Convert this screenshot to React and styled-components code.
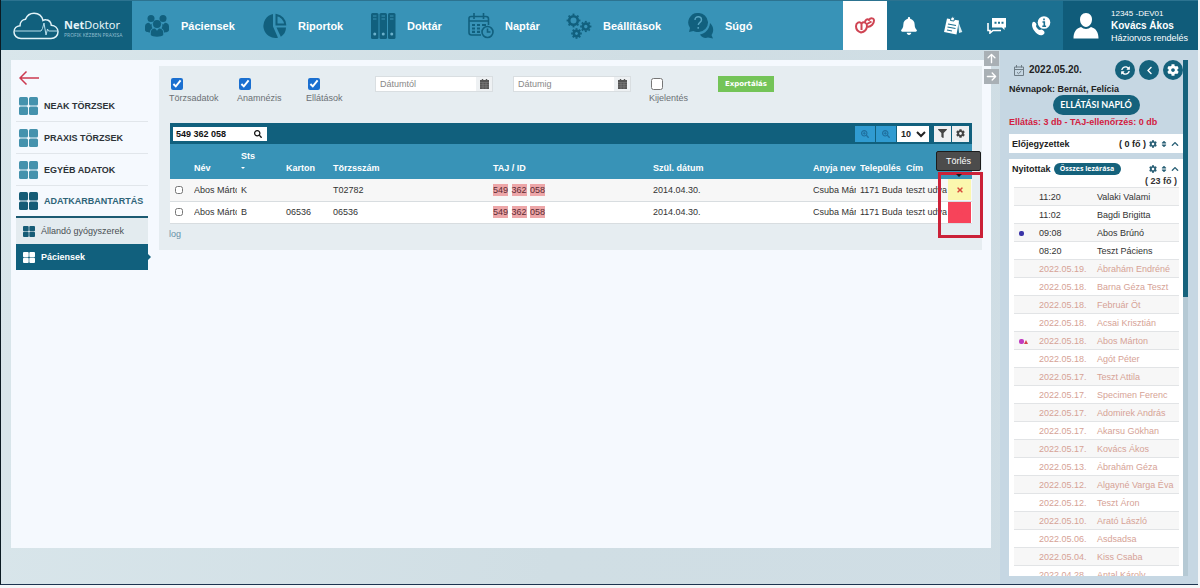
import { useState } from 'react';
import styled, { createGlobalStyle } from 'styled-components';
import { FaSearch, FaSearchPlus, FaFilter, FaCog, FaChevronLeft, FaChevronUp, FaSort, FaSyncAlt, FaBell, FaTimes } from 'react-icons/fa';
import { FaArrowUp, FaArrowRight } from 'react-icons/fa6';

const menuItems = ['NEAK TÖRZSEK', 'PRAXIS TÖRZSEK', 'EGYÉB ADATOK']

const patients = [
  { name: 'Abos Márton', sts: 'K', karton: '', torzs: 'T02782' },
  { name: 'Abos Márton', sts: 'B', karton: '06536', torzs: '06536' },
]

const opened = [
  { when: '11:20', name: 'Valaki Valami', today: true },
  { when: '11:02', name: 'Bagdi Brigitta', today: true },
  { when: '09:08', name: 'Abos Brúnó', today: true, mark: 'blue' },
  { when: '08:20', name: 'Teszt Páciens', today: true },
  { when: '2022.05.19.', name: 'Ábrahám Endréné' },
  { when: '2022.05.18.', name: 'Barna Géza Teszt' },
  { when: '2022.05.18.', name: 'Február Öt' },
  { when: '2022.05.18.', name: 'Acsai Krisztián' },
  { when: '2022.05.18.', name: 'Abos Márton', mark: 'pink' },
  { when: '2022.05.18.', name: 'Agót Péter' },
  { when: '2022.05.17.', name: 'Teszt Attila' },
  { when: '2022.05.17.', name: 'Specimen Ferenc' },
  { when: '2022.05.17.', name: 'Adomirek András' },
  { when: '2022.05.17.', name: 'Akarsu Gökhan' },
  { when: '2022.05.17.', name: 'Kovács Ákos' },
  { when: '2022.05.13.', name: 'Ábrahám Géza' },
  { when: '2022.05.12.', name: 'Algayné Varga Éva' },
  { when: '2022.05.12.', name: 'Teszt Áron' },
  { when: '2022.05.10.', name: 'Arató László' },
  { when: '2022.05.06.', name: 'Asdsadsa' },
  { when: '2022.05.04.', name: 'Kiss Csaba' },
  { when: '2022.04.28.', name: 'Antal Károly' },
]

const CloudLogo = () => (
  <svg width="46" height="28" viewBox="0 0 46 28" fill="none" stroke="#b9dfec" strokeWidth="1.5">
    <path d="M8 26.5C4 26.5 1 23.7 1 20c0-3.600 2.600-6 6-6.300C7 10 9.500 7.500 12.500 7.200 14 3.500 17 1.200 21 1.200c4.500 0 8 2.800 9 7.300 1-.8 2-1 3-.8 3 .3 5 2.500 5.300 5.500C42 13.500 45 16 45 19.800c0 4-3 6.700-7 6.700z" stroke="#e2f3f8" />
    <path d="M2 19h26l1.500-2.500L31 11l2 12 1.500-6 1 2H45" strokeWidth="1" />
  </svg>
)

const PeopleIcon = () => (
  <svg width="26" height="24" viewBox="0 0 26 24" fill="#11607e">
    <circle cx="7" cy="4.500" r="3.500" /><circle cx="19" cy="4.500" r="3.500" />
    <path d="M1 16v-3.500C1 10 2.800 8.800 5 8.800l2 2 2-2c-2 2-1.500 4-.5 5.500C7 15 6 16.500 6 18.500c-2 0-5-.7-5-2.500zM25 16v-3.500c0-2.500-1.800-3.700-4-3.700l-2 2-2-2c2 2 1.500 4 .5 5.500 1.500.7 2.500 2.200 2.500 4.200 2 0 5-.7 5-2.500z" />
    <circle cx="13" cy="10" r="4" />
    <path d="M6.800 21v-2.500c0-2.500 1.700-4 4.200-4l2 2.300 2-2.300c2.500 0 4.200 1.500 4.200 4V21c-1.500 2.300-10.900 2.300-12.400 0z" />
  </svg>
)

const PieIcon = () => (
  <svg width="26" height="26" viewBox="0 0 26 26" fill="#11607e">
    <path d="M12 1v12.500l5 11.200A12 12 0 1 1 12 1z" />
    <path d="M15.500 2a10.500 10.500 0 0 1 8.700 9.500h-8.700z" fill="none" stroke="#11607e" strokeWidth="2" />
    <path d="M15.500 14.500h9.500c0 4-2 7.300-5.200 9.300z" />
  </svg>
)

const BindersIcon = () => (
  <svg width="26" height="26" viewBox="0 0 26 26">
    {[1, 9.5, 18].map(x => (
      <g key={x}>
        <rect x={x} y="0" width="7.500" height="26" rx="1.500" fill="#11607e" />
        <path d={`M${x + 2} 3h3.500M${x + 2} 6h3.500`} stroke="#3b91b2" strokeWidth="1" />
        <circle cx={x + 3.75} cy="21" r="1.500" fill="#6bb0cb" />
      </g>
    ))}
  </svg>
)

const CalendarClockIcon = () => (
  <svg width="26" height="26" viewBox="0 0 26 26" fill="none" stroke="#11607e" strokeWidth="1.600">
    <path d="M13 22H3.500Q1 22 1 19.500V5.500Q1 3.500 3 3.500h15q2.500 0 2.500 2.500v6M1 8h19.500M6 0v6M15.500 0v6" />
    <path d="M4 12h3m2 0h3m2 0h4M4 15.500h3m2 0h3M4 18.800h3m2 0h3" strokeWidth="2.200" />
    <circle cx="19.500" cy="19" r="5.500" />
    <path d="M19.500 15.500V19h3" />
  </svg>
)

const Gear = ({ x, y, r }) => (
  <g transform={`translate(${x} ${y})`} stroke="#11607e">
    <circle r={r} fill="none" strokeWidth="2.600" />
    {[0, 45, 90, 135, 180, 225, 270, 315].map(a => (
      <path key={a} d={`M0 ${r + 1}v1.600`} strokeWidth="1.900" transform={`rotate(${a})`} />
    ))}
  </g>
)

const GearsIcon = () => (
  <svg width="26" height="26" viewBox="0 0 26 26">
    <Gear x={7.5} y={7.5} r={4.3} />
    <Gear x={19.8} y={13.5} r={3} />
    <Gear x={10.5} y={20.5} r={2.7} />
  </svg>
)

const HelpIcon = () => (
  <svg width="26" height="26" viewBox="0 0 26 26">
    <path d="M10 0a9.500 9.500 0 0 1 1 19c-2 .3-4-.2-5.500-1L1 19l1-4A9.500 9.500 0 0 1 10 0z" fill="#11607e" />
    <path d="M22 10c4 3.500 4 9 1.500 12l1.500 3.500-5-1c-3 1-6.500 0-8-3C17 21 21.500 16 22 10z" fill="#11607e" />
    <path d="M7 7c0-4.500 6.500-4 6.500-.3 0 2.800-3 2.500-3.200 5.300M10.200 14v1.800" fill="none" stroke="#58a5c2" strokeWidth="1.400" />
  </svg>
)

const HeartsIcon = () => (
  <svg width="20" height="17" viewBox="0 0 20 17" fill="none" stroke="#cf4453" strokeWidth="2">
    <path d="M6 15.500C2.500 14.500 1 12 1 9.300 1 5.500 4.500 4 6.500 6.500 9 4 12.300 6 12 9.500c-.4 3-3 5.500-6 6zM6.500 6.500v6.500" />
    <path d="M10 5.500C10 2.500 12.500 1.500 14 3c1.500-2.500 5-2 5 .5 0 3-2.500 6-6.500 6.500M12 7l4.500-2.500" />
  </svg>
)

const NotesIcon = () => (
  <svg width="20" height="20" viewBox="0 0 20 20">
    <path d="M15 5l4.300 11-3.300 1z" fill="#d9edf3" />
    <path d="M4 2.500l12 2-2.500 14-12.500-2.500z" fill="#fff" />
    <path d="M7.500 4.500L8 1.500Q10 0 11.500 2l-.5 3z" fill="#fff" stroke="#1c7091" />
    <path d="M5 8l8 1.500M4.500 11l8 1.500M4 14l5 1" stroke="#1c7091" strokeWidth="1.200" />
  </svg>
)

const ChatIcon = () => (
  <svg width="20" height="17" viewBox="0 0 20 17">
    <path d="M1 6v7.500h2V16l3-2.500h8" fill="none" stroke="#fff" strokeWidth="1.600" />
    <path d="M5 1h14v9.500h-1.500V13L15 10.500H5z" fill="#fff" />
    <path d="M7.500 5.800h2m1.500 0h2m1.500 0h2" stroke="#1c7091" strokeWidth="2" />
  </svg>
)

const PhoneInfoIcon = () => (
  <svg width="20" height="20" viewBox="0 0 20 20">
    <path d="M1.500 6.500C3 4.500 5 6.500 5.500 8.500 5 10 4.500 10 6 12s2.500 2.500 4.500 1.500c2 .5 4 2.500 2.500 4.500-3 3-7 .5-9.500-3S.5 9 1.500 6.500z" fill="#fff" />
    <circle cx="13" cy="6.500" r="6.300" fill="#fff" />
    <path d="M13 2.500v1.800M11.500 6h1.800v4M11.300 10.200h3.800" fill="none" stroke="#1c7091" strokeWidth="1.600" />
  </svg>
)

const UserIcon = () => (
  <svg width="26" height="26" viewBox="0 0 26 26" fill="#fff">
    <path d="M13 0c4 0 6 3 6 6.500S16.500 14 13 14 7 10 7 6.500 9 0 13 0z" />
    <path d="M8 14c3 2.500 7 2.500 10 0 5 1.500 7.500 5 7.500 11.500H.5C.5 19 3 15.500 8 14z" />
  </svg>
)

const BackArrow = () => (
  <svg width="20" height="14" viewBox="0 0 20 14" fill="none" stroke="#cc3a50" strokeWidth="1.500">
    <path d="M20 7H1M7.500 .5L1 7l6.500 6.500" />
  </svg>
)

const TilesIcon = ({ size = 19, color }) => (
  <svg width={size} height={size - 1} viewBox="0 0 19 17" preserveAspectRatio="none" fill={color}>
    <rect width="9" height="8" rx="1.500" /><rect x="10" width="9" height="8" rx="1.500" />
    <rect y="9" width="9" height="8" rx="1.500" /><rect x="10" y="9" width="9" height="8" rx="1.500" />
  </svg>
)

const CalendarSolid = () => (
  <svg width="9" height="10" viewBox="0 0 9 10">
    <path d="M0 1h9v9H0z" fill="#555" />
    <path d="M2.500 0v2M6.500 0v2" stroke="#555" strokeWidth="1.400" />
    <path d="M0 3.500h9M0 5.700h9M0 7.900h9M3 3.500V10M6 3.500V10" stroke="#888" strokeWidth=".5" />
  </svg>
)

const CalendarCheck = () => (
  <svg width="10" height="11" viewBox="0 0 10 11" fill="none" stroke="#6d7b84">
    <path d="M.5 2h9v8.500h-9zM.5 4.500h9M2.500 0v2.500M7.500 0v2.500M3 7.300l1.500 1.400L7.300 6" />
  </svg>
)

const navItems = [
  { label: 'Páciensek', icon: <PeopleIcon />, width: 117 },
  { label: 'Riportok', icon: <PieIcon />, width: 109 },
  { label: 'Doktár', icon: <BindersIcon />, width: 98 },
  { label: 'Naptár', icon: <CalendarClockIcon />, width: 98 },
  { label: 'Beállítások', icon: <GearsIcon />, width: 122 },
  { label: 'Súgó', icon: <HelpIcon />, width: 80 },
]

const App = () => {

  const [search, setSearch] = useState('549 362 058')

  return (
    <>
      <GlobalStyle />
      <Page>
        <Header>
          <Logo href="#">
            <CloudLogo />
            <div>
              <LogoName><b>Net</b>Doktor</LogoName>
              <LogoTag>PROFIK KÉZBEN PRAXISA</LogoTag>
            </div>
          </Logo>
          <Nav>
            {navItems.map(item => (
              <NavLink href="#" key={item.label} $width={item.width}>
                <NavIcon>{item.icon}</NavIcon>
                {item.label}
              </NavLink>
            ))}
          </Nav>
          <HeaderButton $active aria-label="Egészség"><HeartsIcon /></HeaderButton>
          <HeaderButton aria-label="Értesítések"><FaBell size={18} /></HeaderButton>
          <HeaderButton aria-label="Jegyzetek"><NotesIcon /></HeaderButton>
          <HeaderButton aria-label="Üzenetek"><ChatIcon /></HeaderButton>
          <HeaderButton aria-label="Segélyvonal"><PhoneInfoIcon /></HeaderButton>
          <User>
            <UserIcon />
            <UserText>
              <small>12345 -DEV01</small>
              <b>Kovács Ákos</b>
              <span>Háziorvos rendelés</span>
            </UserText>
          </User>
        </Header>

        <Body>
          <Main>
            <Menu>
              <BackLink href="#" aria-label="Vissza"><BackArrow /></BackLink>
              {menuItems.map(item => (
                <MenuLink href="#" key={item}>
                  <TilesIcon color="#4592ad" />
                  {item}
                </MenuLink>
              ))}
              <MenuLink href="#" $open>
                <TilesIcon color="#165c76" />
                ADATKARBANTARTÁS
              </MenuLink>
              <SubLink href="#"><TilesIcon size={12} color="#165c76" />Állandó gyógyszerek</SubLink>
              <SubLink href="#" $active><TilesIcon size={12} color="#fff" />Páciensek</SubLink>
            </Menu>

            <Content>
              <Filters>
                {['Törzsadatok', 'Anamnézis', 'Ellátások'].map(label => (
                  <CheckLabel key={label}>
                    <Check type="checkbox" defaultChecked />
                    {label}
                  </CheckLabel>
                ))}
                <DateField>
                  <input type="text" placeholder="Dátumtól" aria-label="Dátumtól" />
                  <button aria-label="Dátumtól választó"><CalendarSolid /></button>
                </DateField>
                <DateField>
                  <input type="text" placeholder="Dátumig" aria-label="Dátumig" />
                  <button aria-label="Dátumig választó"><CalendarSolid /></button>
                </DateField>
                <CheckLabel>
                  <Check type="checkbox" />
                  Kijelentés
                </CheckLabel>
                <ExportButton>Exportálás</ExportButton>
              </Filters>

              <Grid>
                <Toolbar>
                  <SearchBox>
                    <input type="text" aria-label="Keresés" value={search} onChange={(e) => setSearch(e.target.value)} />
                    <FaSearch size={8} />
                  </SearchBox>
                  <ZoomButton aria-label="Szűkítés"><FaSearchPlus size={8} /></ZoomButton>
                  <ZoomButton aria-label="Bővítés"><FaSearchPlus size={8} /></ZoomButton>
                  <PageSize aria-label="Sorok száma" defaultValue="10">
                    <option>10</option>
                    <option>25</option>
                  </PageSize>
                  <ToolButton aria-label="Szűrő"><FaFilter size={9} /></ToolButton>
                  <ToolButton aria-label="Beállítás"><FaCog size={9} /></ToolButton>
                </Toolbar>
                <Table>
                  <colgroup>
                    <Col $w={20} /><Col $w={47} /><Col $w={45} /><Col $w={47} />
                    <col /><col /><col />
                    <Col $w={47} /><Col $w={46} /><Col $w={45} /><Col $w={25} />
                  </colgroup>
                  <thead>
                    <tr>
                      <th></th>
                      <th>Név</th>
                      <th>Sts<br /><SortMark /></th>
                      <th>Karton</th>
                      <th>Törzsszám</th>
                      <th>TAJ / ID</th>
                      <th>Szül. dátum</th>
                      <th><Clip>Anyja neve</Clip></th>
                      <th><Clip>Település</Clip></th>
                      <th>Cím</th>
                      <th></th>
                    </tr>
                  </thead>
                  <tbody>
                    {patients.map((p, index) => (
                      <tr key={p.sts}>
                        <td><RowCheck type="checkbox" aria-label={`${p.name} ${p.sts}`} /></td>
                        <td><Clip>{p.name}</Clip></td>
                        <td>{p.sts}</td>
                        <td>{p.karton}</td>
                        <td>{p.torzs}</td>
                        <td><mark>549</mark> <mark>362</mark> <mark>058</mark></td>
                        <td>2014.04.30.</td>
                        <td><Clip>Csuba Mária</Clip></td>
                        <td><Clip>1171 Budapest</Clip></td>
                        <td><Clip>teszt udvar</Clip></td>
                        <ActionCell>
                          <DeleteButton aria-label="Törlés" $hot={index === 1}><FaTimes size={8} /></DeleteButton>
                        </ActionCell>
                      </tr>
                    ))}
                  </tbody>
                </Table>
                <Highlight />
                <Tooltip role="tooltip">Törlés</Tooltip>
              </Grid>
              <LogLink href="#">log</LogLink>
            </Content>
          </Main>

          <Side>
            <Toggles>
              <button aria-label="Fel"><FaArrowUp size={11} /></button>
              <button aria-label="Jobbra"><FaArrowRight size={11} /></button>
            </Toggles>
            <SideInner>
              <DateRow>
                <CalendarCheck />
                <strong>2022.05.20.</strong>
                <RoundButton aria-label="Frissítés"><FaSyncAlt size={9} /></RoundButton>
                <RoundButton aria-label="Előző"><FaChevronLeft size={9} /></RoundButton>
                <RoundButton aria-label="Beállítások"><FaCog size={12} /></RoundButton>
              </DateRow>
              <SideLine>Névnapok: Bernát, Felícia</SideLine>
              <LogButton>ELLÁTÁSI NAPLÓ</LogButton>
              <SideLine $alert>Ellátás: 3 db - TAJ-ellenőrzés: 0 db</SideLine>
              <Card>
                <CardHead>
                  <span>Előjegyzettek</span>
                  <Count>( 0 fő )</Count>
                  <FaCog size={8} /><FaSort size={8} /><FaChevronUp size={8} />
                </CardHead>
              </Card>
              <Card $grow>
                <CardHead>
                  <span>Nyitottak</span>
                  <CloseAll>Összes lezárása</CloseAll>
                  <Spacer />
                  <FaCog size={8} /><FaSort size={8} /><FaChevronUp size={8} />
                </CardHead>
                <Total>( 23 fő )</Total>
                <OpenTable>
                  <colgroup><Col $w={25} /><Col $w={58} /><col /></colgroup>
                  <tbody>
                    {opened.map((row, index) => (
                      <OpenRow key={index} $today={row.today}>
                        <td>
                          {row.mark === 'blue' && <Dot $color="#3a34a8" />}
                          {row.mark === 'pink' && <><Dot $color="#c03cc0" /><Triangle /></>}
                        </td>
                        <td>{row.when}</td>
                        <td>{row.name}</td>
                      </OpenRow>
                    ))}
                  </tbody>
                </OpenTable>
              </Card>
            </SideInner>
            <ScrollTrack><ScrollThumb /></ScrollTrack>
          </Side>
        </Body>
      </Page>
    </>
  );
}

const GlobalStyle = createGlobalStyle`
  * { box-sizing: border-box; }
  body {
    margin: 0;
    background: #f4f6f8;
    font: 9px/12px "Liberation Sans", Arial, sans-serif;
    color: #333;
  }
  button, input, select { font: inherit; margin: 0; padding: 0; }
  button {
    border: 0;
    display: flex;
    align-items: center;
    justify-content: center;
    cursor: pointer;
  }
  a { text-decoration: none; }
  svg { flex: none; display: block; }
`

const Page = styled.div`
  height: calc(100vh - 3px);
  margin-right: 2px;
  display: flex;
  flex-direction: column;
  border-left: 1px solid #0b1a22;
  border-bottom: 1px solid #1d3450;
  background: linear-gradient(100deg, #d9e6eb, #d0dee4 50%, #cfdde5);
  overflow: hidden;
`

const Header = styled.header`
  flex: none;
  height: 50px;
  display: flex;
  background: #3893b7;
  border-top: 1px solid #2c7390;
  color: #fff;
`

const Logo = styled.a`
  width: 131px;
  padding-left: 12px;
  display: flex;
  align-items: center;
  gap: 5px;
  background: #11607d;
  color: #e6f4f8;
`

const LogoName = styled.div`
  padding-top: 4px;
  font: 11px/14px "Noto Sans", sans-serif;
`

const LogoTag = styled.div`
  font: 5px/6px "Noto Sans", sans-serif;
  color: #8fbccd;
  white-space: nowrap;
`

const Nav = styled.nav`
  flex: 1;
  display: flex;
  padding-left: 12px;
`

const NavLink = styled.a`
  width: ${p => p.$width}px;
  display: flex;
  align-items: center;
  gap: 11px;
  color: #fff;
  font-size: 11px;
  font-weight: bold;
`

const NavIcon = styled.span`
  width: 26px;
`

const HeaderButton = styled.button`
  width: 44px;
  background: ${p => p.$active ? '#fff' : '#1c7091'};
  color: #fff;
`

const User = styled.div`
  width: 135px;
  padding-left: 10px;
  display: flex;
  align-items: center;
  gap: 12px;
  background: #105c7a;
`

const UserText = styled.div`
  display: flex;
  flex-direction: column;
  white-space: nowrap;
  small { font-size: 8px; }
  b { font-size: 10px; }
`

const Body = styled.div`
  flex: 1;
  min-height: 0;
  display: flex;
`

const Main = styled.main`
  flex: 1;
  min-width: 0;
  margin: 10px 9px 36px 10px;
  padding: 6px 9px 6px 5px;
  display: flex;
  align-items: flex-start;
  gap: 11px;
  background: #f5f9fe;
`

const Menu = styled.nav`
  width: 132px;
`

const BackLink = styled.a`
  display: flex;
  padding: 5px 0;
  padding-left: 3px;
`

const MenuLink = styled.a`
  height: 32px;
  padding-left: 3px;
  display: flex;
  align-items: center;
  gap: 6px;
  border-bottom: ${p => p.$open ? '2px solid #1b5a72' : '1px solid #e1e6eb'};
  color: ${p => p.$open ? '#2e6478' : '#2d3338'};
  font-weight: bold;
`

const SubLink = styled.a`
  position: relative;
  height: 26px;
  padding-left: 7px;
  display: flex;
  align-items: center;
  gap: 6px;
  background: ${p => p.$active ? '#11607d' : '#e3ebef'};
  color: ${p => p.$active ? '#fff' : '#4a4f53'};
  font-weight: ${p => p.$active ? 'bold' : 'normal'};
  &::after {
    content: '';
    display: ${p => p.$active ? 'block' : 'none'};
    position: absolute;
    left: 100%;
    border: 3px solid transparent;
    border-left-color: #11607d;
  }
`

const Content = styled.section`
  flex: 1;
  min-width: 0;
  padding: 10px;
  background: #e6edf1;
`

const Filters = styled.div`
  display: grid;
  grid-template-columns: 68px 69px 69px 138px 136px 69px 1fr;
  align-items: start;
  height: 47px;
`

const CheckLabel = styled.label`
  display: flex;
  flex-direction: column;
  gap: 2px;
  color: #6b7075;
`

const Check = styled.input`
  width: 12px;
  height: 12px;
  margin: 2px 0 0 2px;
  accent-color: #1a6fd0;
`

const DateField = styled.div`
  display: flex;
  width: 118px;
  height: 16px;
  border: 1px solid #d9dee1;
  input {
    flex: 1;
    min-width: 0;
    padding: 0 4px;
    border: 0;
    background: #fff;
  }
  input::placeholder { color: #888; opacity: 1; }
  button {
    width: 16px;
    background: #eef1f3;
  }
`

const ExportButton = styled.button`
  justify-self: start;
  padding: 0 7px;
  height: 16px;
  background: #74c458;
  color: #fff;
  font: bold 7px/12px "DejaVu Sans", sans-serif;
`

const Grid = styled.div`
  position: relative;
  margin-left: 1px;
`

const Toolbar = styled.div`
  height: 21px;
  padding: 0 3px;
  display: flex;
  align-items: center;
  background: #11607d;
`

const SearchBox = styled.div`
  width: 94px;
  height: 14px;
  margin-right: auto;
  padding-right: 5px;
  display: flex;
  align-items: center;
  background: #fff;
  color: #111;
  input {
    flex: 1;
    min-width: 0;
    padding-left: 3px;
    border: 0;
    background: none;
    font-weight: bold;
    color: #111;
  }
`

const ZoomButton = styled.button`
  width: 20px;
  height: 16px;
  margin-right: 1px;
  background: #309bd1;
  color: #1f6f9e;
`

const PageSize = styled.select`
  width: 32px;
  height: 16px;
  margin-right: 4px;
  border: 0;
  background: #fff;
  color: #222;
  font-weight: bold;
`

const ToolButton = styled.button`
  width: 17px;
  height: 16px;
  margin-left: 1px;
  background: #eef0f2;
  color: #444;
`

const Table = styled.table`
  width: 100%;
  table-layout: fixed;
  border-collapse: collapse;
  white-space: nowrap;
  th {
    height: 35px;
    padding: 0 0 5px 4px;
    vertical-align: bottom;
    text-align: left;
    background: #3893b7;
    color: #fff;
  }
  td {
    height: 22px;
    padding: 0 0 0 4px;
    background: #fff;
    border-bottom: 1px solid #d8dde0;
  }
  tr:nth-child(odd) td { background: #f7f7f7; }
  mark {
    padding: 1px 0;
    margin-right: 1px;
    background: #eda6a8;
    color: #5c2a33;
  }
`

const Col = styled.col`
  width: ${p => p.$w}px;
`

const SortMark = styled.i`
  display: inline-block;
  border: 2px solid transparent;
  border-top-color: #fff;
  vertical-align: middle;
`

const Clip = styled.div`
  overflow: hidden;
`

const RowCheck = styled.input`
  display: block;
  width: 8px;
  height: 8px;
  margin-left: 1px;
`

const ActionCell = styled.td`
  && { padding: 0 1px; }
`

const DeleteButton = styled.button`
  width: 23px;
  height: 21px;
  background: ${p => p.$hot ? '#f7435a' : '#fbf7ae'};
  color: ${p => p.$hot ? '#f7435a' : '#d84a3c'};
`

const Highlight = styled.div`
  position: absolute;
  top: 49px;
  right: -11px;
  width: 45px;
  height: 66px;
  border: 3px solid #cb2138;
  pointer-events: none;
`

const Tooltip = styled.div`
  position: absolute;
  top: 28px;
  right: -9px;
  width: 45px;
  height: 20px;
  border: 1px solid #1c1c1c;
  border-radius: 2px;
  background: #4c4c4c;
  color: #fff;
  line-height: 18px;
  text-align: center;
  &::after {
    content: '';
    position: absolute;
    top: 22px;
    left: 19px;
    border: 3px solid transparent;
    border-top-color: #1c1c1c;
  }
`

const LogLink = styled.a`
  display: block;
  padding-top: 4px;
  color: #6690a8;
`

const Side = styled.aside`
  position: relative;
  width: 198px;
  padding: 10px 10px 8px 9px;
  display: flex;
  background: #c6d7e3;
`

const Toggles = styled.div`
  position: absolute;
  top: 1px;
  left: -16px;
  display: flex;
  flex-direction: column;
  gap: 3px;
  button {
    width: 15px;
    height: 15px;
    background: #a9b0b5;
    color: #fff;
  }
`

const SideInner = styled.div`
  flex: 1;
  min-width: 0;
  display: flex;
  flex-direction: column;
`

const DateRow = styled.div`
  height: 20px;
  padding-left: 5px;
  display: flex;
  align-items: center;
  gap: 4px;
  color: #222;
  strong {
    flex: 1;
    padding-left: 1px;
    font-size: 10px;
  }
`

const RoundButton = styled.button`
  width: 20px;
  height: 20px;
  border-radius: 50%;
  background: #15627c;
  color: #fff;
`

const SideLine = styled.div`
  padding: ${p => p.$alert ? 1 : 3}px 0 0;
  font-weight: bold;
  white-space: nowrap;
  color: ${p => p.$alert ? '#d3203f' : '#222'};
`

const LogButton = styled.button`
  align-self: center;
  width: 87px;
  height: 20px;
  border-radius: 10px;
  background: #15627c;
  color: #fff;
  font: bold 9px/12px Lato, sans-serif;
`

const Card = styled.div`
  flex: ${p => p.$grow ? '1' : 'none'};
  min-height: 0;
  margin-top: 6px;
  padding: 0 4px 0 5px;
  overflow: hidden;
  background: #fff;
`

const CardHead = styled.div`
  height: 19px;
  margin-left: -2px;
  display: flex;
  align-items: center;
  gap: 3px;
  font-weight: bold;
  color: #222;
  svg { color: #2a6076; }
`

const Count = styled.span`
  margin-left: auto;
`

const Spacer = styled.span`
  flex: 1;
`

const CloseAll = styled.button`
  width: 67px;
  height: 12px;
  border-radius: 6px;
  background: #15627c;
  color: #fff;
  font: bold 7px/12px "Open Sans", sans-serif;
  white-space: nowrap;
`

const Total = styled.div`
  height: 9px;
  padding-right: 2px;
  font-weight: bold;
  line-height: 7px;
  text-align: right;
`

const OpenTable = styled.table`
  width: 100%;
  table-layout: fixed;
  border-collapse: collapse;
  white-space: nowrap;
  td {
    height: 18px;
    padding: 0;
    border-top: 1px solid #e2e4e6;
  }
  tr:nth-child(odd) td { background: #f7f7f7; }
`

const OpenRow = styled.tr`
  color: ${p => p.$today ? '#333' : '#d6a296'};
`

const Dot = styled.i`
  display: inline-block;
  width: 5px;
  height: 5px;
  margin-left: 5px;
  border-radius: 2px;
  background: ${p => p.$color};
`

const Triangle = styled.i`
  display: inline-block;
  border: 2px solid transparent;
  border-top-width: 0;
  border-bottom: 4px solid #d8434e;
`

const ScrollTrack = styled.div`
  width: 5px;
  background: #b5c9d4;
`

const ScrollThumb = styled.div`
  height: 46%;
  background: #15627c;
`

export default App
